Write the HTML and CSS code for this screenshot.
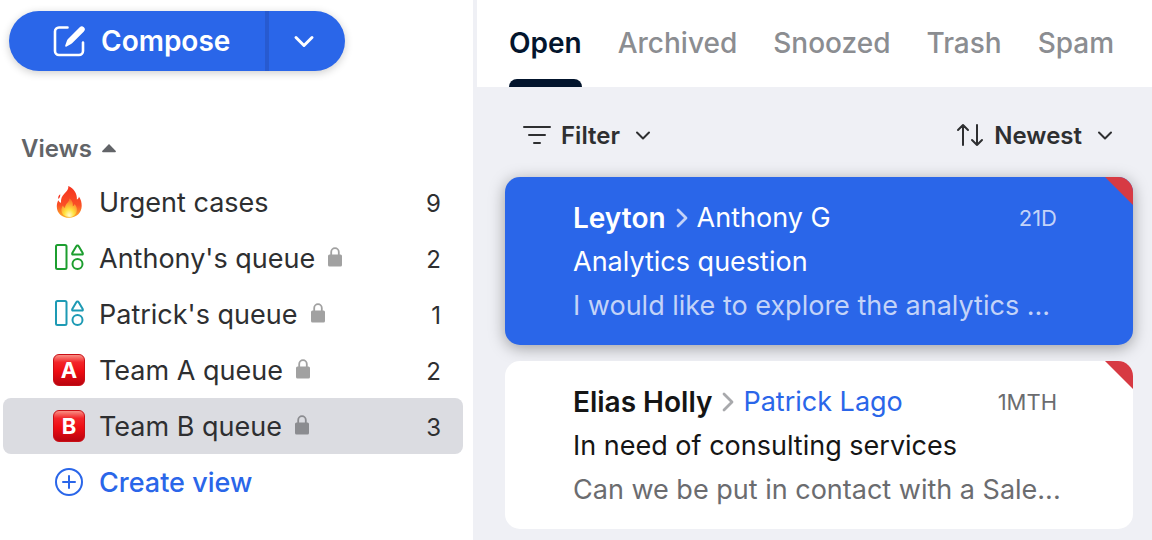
FILE: index.html
```html
<!DOCTYPE html>
<html lang="en">
<head>
<meta charset="UTF-8" />
<meta name="viewport" content="width=device-width, initial-scale=1" />
<title>Team Inbox</title>
<link rel="stylesheet" href="styles.css">
</head>
<body>
  <div class="app">
    <aside class="sidebar">
      <div class="compose">
        <button type="button" class="compose-main">
          <svg width="34" height="34" viewBox="0 0 34 34" fill="none" stroke="#fff" stroke-width="2.600" stroke-linecap="round">
            <path d="M15.500 3.500H7a4 4 0 0 0-4 4V27a4 4 0 0 0 4 4h20a4 4 0 0 0 4-4V18.500"/>
            <path d="M13.500 22.600q-.6-.3-.2-1.400l1.700-4.700q.3-.8 1-1.500L27.700 3.300a2.900 2.900 0 0 1 4.200 4.100L20.100 19.200q-.7.700-1.500 1.100l-4 2.200q-.8.300-1.100.1z" fill="#fff" stroke="none"/>
          </svg>
          Compose
        </button>
        <button type="button" class="compose-more" aria-label="More compose options">
          <svg width="20" height="12" viewBox="0 0 20 12" fill="none" stroke="#fff" stroke-width="3" stroke-linecap="round" stroke-linejoin="round"><path d="M2 2.500l8 8 8-8"/></svg>
        </button>
      </div>

      <button type="button" class="views-toggle">
        Views
        <svg width="14" height="9" viewBox="0 0 14 9"><path d="M7 0L13.800 7q.4 1.200-.8 1.200H1q-1.200 0-.8-1.200z" fill="#626468"/></svg>
      </button>

      <nav class="views">
        <a href="#" class="view">
          <span class="view-icon">
            <svg width="32" height="32" viewBox="0 0 32 32">
              <defs>
                <linearGradient id="flame" x1="0" y1="0" x2="0" y2="1">
                  <stop offset="0" stop-color="#f5331f"/>
                  <stop offset="0.600" stop-color="#fa4f26"/>
                  <stop offset="1" stop-color="#fdb428"/>
                </linearGradient>
                <radialGradient id="core" cx="0.500" cy="0.900" r="0.800">
                  <stop offset="0" stop-color="#fffbd0"/>
                  <stop offset="0.400" stop-color="#ffe23d"/>
                  <stop offset="1" stop-color="#fb7a2b"/>
                </radialGradient>
              </defs>
              <path d="M15.300 0c5.600 2.700 9 7.200 8.600 13.600 1.300-.6 2-1.700 2-3.100 2 3 2.900 6 2.800 9.600-.2 6.900-5.200 11.700-12.500 11.700S3.900 27.200 3.800 20.400c0-2.300.5-4.400 1.700-6.100.5 1.300 1.300 2.200 2.500 2.500-.3-4.100 1-6.700 3.500-9.200C13.800 5.200 15.900 3 15.300 0z" fill="url(#flame)"/>
              <path d="M7.200 8.300c.2 2.200-.5 3.300-1.700 4.700-.8-1.700 0-3.600 1.700-4.700z" fill="#f5331f"/>
              <path d="M16.500 12.500c3.200 2.400 3.700 5 3.300 7.700.9-.4 1.500-1.200 1.800-2.300 1.700 2 2.400 3.700 2.300 6-.2 4.200-3.300 7.200-7.800 7.200s-7.700-2.900-7.700-7c0-1.800.5-3.300 1.600-4.700.3 1.300 1 2.100 2 2.500.1-4.300 4.200-5.300 4.500-9.400z" fill="url(#core)"/>
            </svg>
          </span>
          <span class="view-name">Urgent cases</span>
          <span class="view-count">9</span>
        </a>
        <a href="#" class="view">
          <span class="view-icon icon-green">
            <svg width="28" height="28" viewBox="0 1 28 28" fill="none" stroke="currentColor" stroke-width="2" stroke-linejoin="round"><rect x="1" y="2" width="10.500" height="24" rx="1.500"/><path d="M22.500 2.500q.8 0 1.200.8l4 6.800q.6 1.400-.8 1.400h-8.800q-1.400 0-.8-1.400l4-6.800q.4-.8 1.200-.8z"/><circle cx="22.500" cy="21" r="5"/></svg>
          </span>
          <span class="view-name">Anthony's queue</span>
          <svg class="lock" width="16" height="20" viewBox="0 0 16 20"><rect x="1" y="7.500" width="14" height="12" rx="1.500" fill="currentColor"/><path d="M4.200 8V5a3.800 3.800 0 0 1 7.600 0v3" fill="none" stroke="currentColor" stroke-width="1.800"/></svg>
          <span class="view-count">2</span>
        </a>
        <a href="#" class="view">
          <span class="view-icon icon-teal">
            <svg width="28" height="28" viewBox="0 1 28 28" fill="none" stroke="currentColor" stroke-width="2" stroke-linejoin="round"><rect x="1" y="2" width="10.500" height="24" rx="1.500"/><path d="M22.500 2.500q.8 0 1.200.8l4 6.800q.6 1.400-.8 1.400h-8.800q-1.400 0-.8-1.400l4-6.800q.4-.8 1.200-.8z"/><circle cx="22.500" cy="21" r="5"/></svg>
          </span>
          <span class="view-name">Patrick's queue</span>
          <svg class="lock" width="16" height="20" viewBox="0 0 16 20"><rect x="1" y="7.500" width="14" height="12" rx="1.500" fill="currentColor"/><path d="M4.200 8V5a3.800 3.800 0 0 1 7.600 0v3" fill="none" stroke="currentColor" stroke-width="1.800"/></svg>
          <span class="view-count">1</span>
        </a>
        <a href="#" class="view">
          <span class="view-icon letter">A</span>
          <span class="view-name">Team A queue</span>
          <svg class="lock" width="16" height="20" viewBox="0 0 16 20"><rect x="1" y="7.500" width="14" height="12" rx="1.500" fill="currentColor"/><path d="M4.200 8V5a3.800 3.800 0 0 1 7.600 0v3" fill="none" stroke="currentColor" stroke-width="1.800"/></svg>
          <span class="view-count">2</span>
        </a>
        <a href="#" class="view selected">
          <span class="view-icon letter">B</span>
          <span class="view-name">Team B queue</span>
          <svg class="lock" width="16" height="20" viewBox="0 0 16 20"><rect x="1" y="7.500" width="14" height="12" rx="1.500" fill="currentColor"/><path d="M4.200 8V5a3.800 3.800 0 0 1 7.600 0v3" fill="none" stroke="currentColor" stroke-width="1.800"/></svg>
          <span class="view-count">3</span>
        </a>
        <button type="button" class="view create">
          <span class="view-icon">
            <svg width="28" height="28" viewBox="0 0 28 28" fill="none" stroke="currentColor" stroke-width="2" stroke-linecap="round"><circle cx="14" cy="14" r="13"/><path d="M14 8v12M8 14h12"/></svg>
          </span>
          Create view
        </button>
      </nav>
    </aside>

    <main class="inbox">
      <nav class="tabs">
        <a href="#" class="tab active">Open</a>
        <a href="#" class="tab">Archived</a>
        <a href="#" class="tab">Snoozed</a>
        <a href="#" class="tab">Trash</a>
        <a href="#" class="tab">Spam</a>
      </nav>

      <div class="toolbar">
        <button type="button" class="tool">
          <svg width="28" height="20" viewBox="0 0 28 20" fill="none" stroke="currentColor" stroke-width="2" stroke-linecap="round"><path d="M1 1h26M6 9h16M11 17h6"/></svg>
          Filter
          <svg class="chevron" width="14" height="9" viewBox="0 0 14 9" fill="none" stroke="currentColor" stroke-width="2" stroke-linecap="round" stroke-linejoin="round"><path d="M1 1.500l6 6 6-6"/></svg>
        </button>
        <button type="button" class="tool">
          <svg width="28" height="24" viewBox="0 0 28 24" fill="none" stroke="currentColor" stroke-width="2" stroke-linecap="round" stroke-linejoin="round"><path d="M7 21V1M2 6l5-5 5 5M21 1v20M16 16l5 5 5-5"/></svg>
          Newest
          <svg class="chevron" width="14" height="9" viewBox="0 0 14 9" fill="none" stroke="currentColor" stroke-width="2" stroke-linecap="round" stroke-linejoin="round"><path d="M1 1.500l6 6 6-6"/></svg>
        </button>
      </div>

      <div class="conversations">
        <article class="card current">
          <div class="card-top">
            <span class="sender">Leyton</span>
            <svg class="arrow" width="12" height="20" viewBox="0 0 12 20" fill="none" stroke="currentColor" stroke-width="2.800" stroke-linecap="round" stroke-linejoin="round"><path d="M2 2l8 8-8 8"/></svg>
            <span class="assignee">Anthony G</span>
            <span class="time">21D</span>
          </div>
          <div class="subject">Analytics question</div>
          <div class="preview">I would like to explore the analytics ...</div>
        </article>
        <article class="card">
          <div class="card-top">
            <span class="sender">Elias Holly</span>
            <svg class="arrow" width="12" height="20" viewBox="0 0 12 20" fill="none" stroke="currentColor" stroke-width="2.800" stroke-linecap="round" stroke-linejoin="round"><path d="M2 2l8 8-8 8"/></svg>
            <span class="assignee">Patrick Lago</span>
            <span class="time">1MTH</span>
          </div>
          <div class="subject">In need of consulting services</div>
          <div class="preview">Can we be put in contact with a Sale...</div>
        </article>
      </div>
    </main>
  </div>
</body>
</html>
```
FILE: styles.css
```css
* { box-sizing: border-box; }
body {
  margin: 0;
  font-family: Inter, "Liberation Sans", sans-serif;
  font-size: 27px;
  color: #2e2f31;
  background: #fff;
}
button {
  font: inherit;
  color: inherit;
  border: none;
  background: none;
  padding: 0;
  cursor: pointer;
}
a { color: inherit; text-decoration: none; }
svg { flex: none; overflow: visible; }

.app {
  display: flex;
  min-height: 100vh;
}

/* Sidebar */
.sidebar {
  flex: none;
  width: 477px;
  padding-top: 11px;
  border-right: 4px solid #eff0f5;
}
.compose {
  display: inline-flex;
  height: 60px;
  margin-left: 9px;
  border-radius: 30px;
  overflow: hidden;
  background: #2a66e9;
  color: #fff;
  box-shadow: 0 2px 8px rgba(0, 0, 0, 0.2);
  vertical-align: top;
}
.compose-main {
  display: flex;
  align-items: center;
  gap: 15px;
  padding: 0 35px 0 43px;
  border-right: 4px solid #275ad0;
  font-size: 28px;
  font-weight: 600;
}
.compose-more {
  display: flex;
  align-items: center;
  padding: 0 31px 0 25px;
}
.views-toggle {
  display: flex;
  align-items: center;
  gap: 10px;
  height: 40px;
  margin: 57px 0 6px 21px;
  font-size: 24px;
  font-weight: 600;
  color: #626468;
}
.views { padding: 0 10px 0 3px; }
.view {
  display: flex;
  align-items: center;
  width: 100%;
  height: 56px;
  padding: 0 22px 0 50px;
  border-radius: 8px;
}
.view.selected { background: #dbdce1; }
.view-icon {
  display: flex;
  align-items: center;
  justify-content: center;
  width: 32px;
  height: 32px;
  margin-right: 14px;
}
.icon-green { color: #1c9e2f; }
.icon-teal { color: #1d9ab4; }
.letter {
  border: 1px solid #c90f16;
  border-radius: 6px;
  background: linear-gradient(#f99085, #f3262a 24%, #ee0d13 55%, #b9040f);
  color: #fff;
  font-size: 22px;
  font-weight: 700;
}
.lock {
  margin: 0 0 2px 12px;
  color: #a1a1a1;
}
.selected .lock { color: #8b8c90; }
.view-count {
  margin-left: auto;
  padding-top: 2px;
  font-size: 24px;
}
.create {
  color: #2a66e9;
  font-weight: 500;
}

/* Inbox */
.inbox {
  flex: 1;
  min-width: 0;
  background: #eff0f5;
}
.tabs {
  display: flex;
  gap: 36px;
  padding: 0 32px;
  background: #fff;
  font-size: 28px;
  line-height: 87px;
}
.tab {
  font-weight: 500;
  color: #8b8d91;
}
.tab.active {
  position: relative;
  font-weight: 600;
  color: #03152d;
}
.tab.active::after {
  content: "";
  position: absolute;
  left: 0;
  right: 0;
  bottom: 0;
  height: 8px;
  border-radius: 8px 8px 0 0;
  background: #03152d;
}
.toolbar {
  display: flex;
  justify-content: space-between;
  height: 90px;
  padding: 7px 40px 0 46px;
}
.tool {
  display: flex;
  align-items: center;
  gap: 10px;
  font-size: 24px;
  font-weight: 600;
}
.chevron { margin-left: 6px; }
.conversations {
  display: flex;
  flex-direction: column;
  gap: 16px;
  padding: 0 19px 11px 28px;
}
.card {
  position: relative;
  padding: 19px 68px 17px;
  border-radius: 15px;
  overflow: hidden;
  background: #fff;
  line-height: 44px;
  white-space: nowrap;
}
/* red corner flag */
.card::after {
  content: "";
  position: absolute;
  top: 0;
  right: 0;
  width: 28px;
  height: 28px;
  background: #d73a43;
  clip-path: polygon(0 0, 100% 0, 100% 100%);
}
.card-top {
  display: flex;
  align-items: center;
}
.sender {
  font-size: 28px;
  font-weight: 600;
  color: #151515;
}
.arrow {
  margin: 0 9px 0 10px;
  color: #a8a9ac;
}
.assignee { color: #2a66e9; }
.time {
  margin-left: auto;
  padding-right: 8px;
  font-size: 22px;
  color: #6b6c6f;
}
.subject { color: #151515; }
.preview {
  overflow: hidden;
  text-overflow: ellipsis;
  color: #6b6c6f;
}
.card.current {
  background: #2a66e9;
  box-shadow: 0 3px 16px rgba(0, 0, 0, 0.35);
}
.current .sender,
.current .assignee,
.current .subject { color: #fff; }
.current .arrow,
.current .time,
.current .preview { color: #c3d3f8; }
```
